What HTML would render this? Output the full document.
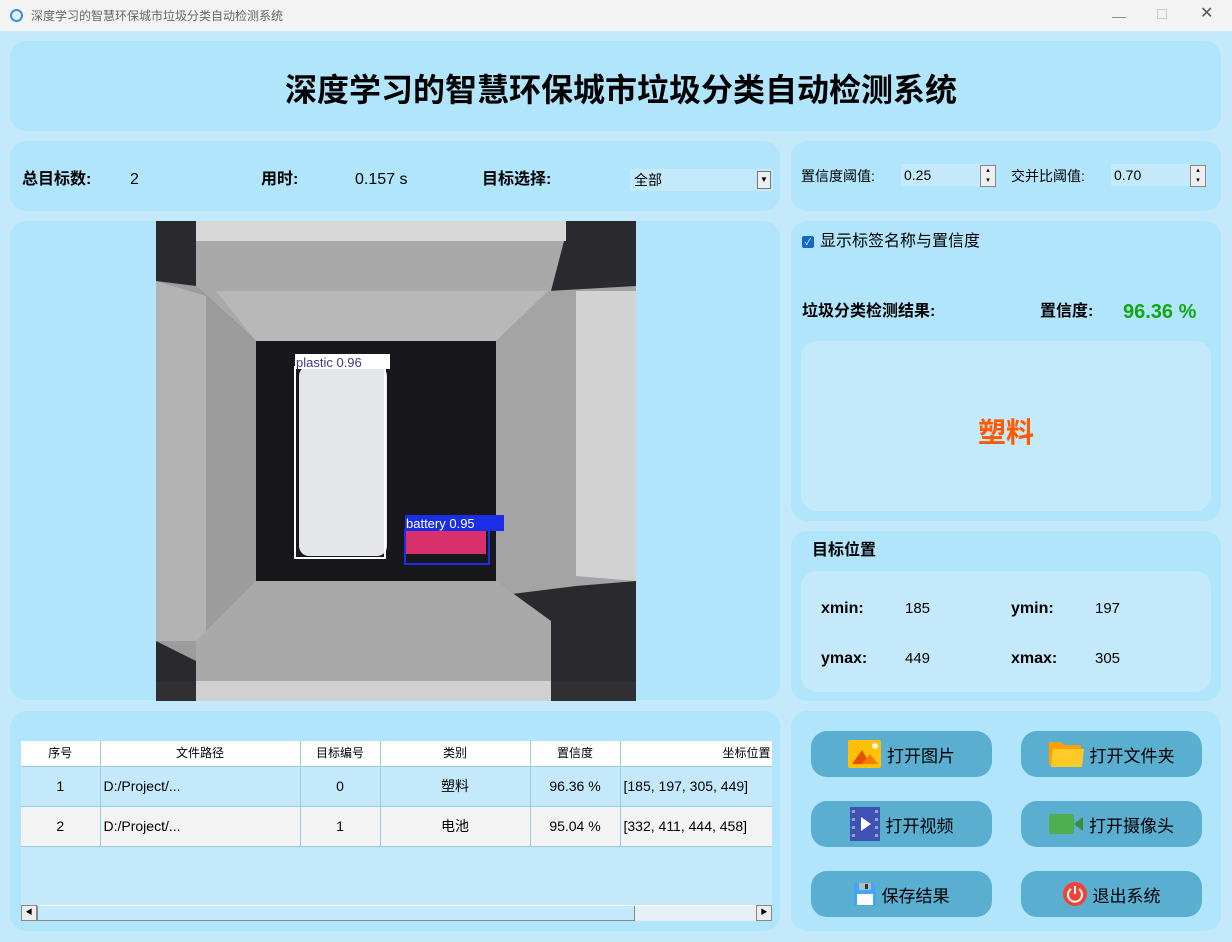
<!DOCTYPE html>
<html><head><meta charset="utf-8"><style>
*{margin:0;padding:0;box-sizing:border-box}
body{width:1232px;height:942px;background:#c4e9fb;font-family:"Liberation Sans","Noto Sans CJK SC",sans-serif;position:relative;overflow:hidden;color:#000}
.abs{position:absolute;line-height:20px}
.panel{position:absolute;background:#b1e5fc;border-radius:16px}
.tb{position:absolute;left:0;top:0;width:1232px;height:31px;background:#f3f3f3;font-size:12px;color:#666}
.b{font-weight:bold}
.btn{position:absolute;width:181px;height:46px;background:#5aaed0;border-radius:16px;font-size:17px;display:flex;align-items:center;justify-content:center;gap:6px}
table{border-collapse:collapse;font-size:14px}
td{border-right:1px solid #9ccbe0;border-bottom:1px solid #9ccbe0;text-align:center}
.spin{position:absolute;width:16px;height:22px;background:#eee;border:1px solid #888;font-size:7px;line-height:10px;text-align:center}
</style></head><body>
<div class="tb">
<div class="abs" style="left:10px;top:9px;width:13px;height:13px;border-radius:50%;border:2px solid #3a8ee6;background:#e8f2fc"></div>
<div class="abs" style="left:31px;top:6px">深度学习的智慧环保城市垃圾分类自动检测系统</div>
<div class="abs" style="left:1112px;top:6px;font-size:14px;color:#888">—</div>
<div class="abs" style="left:1157px;top:9px;width:10px;height:10px;border:1px solid #ccc"></div>
<div class="abs" style="left:1200px;top:4px;font-size:16px;color:#555">✕</div>
</div>

<div class="panel" style="left:10px;top:41px;width:1211px;height:90px"></div>
<div class="abs b" style="left:0;width:1242px;top:72px;text-align:center;font-size:32px;line-height:36px">深度学习的智慧环保城市垃圾分类自动检测系统</div>

<div class="panel" style="left:10px;top:141px;width:770px;height:70px"></div>
<div class="abs b" style="left:22px;top:170px;font-size:16px">总目标数:</div>
<div class="abs" style="left:130px;top:170px;font-size:16px">2</div>
<div class="abs b" style="left:261px;top:170px;font-size:16px">用时:</div>
<div class="abs" style="left:355px;top:170px;font-size:16px">0.157 s</div>
<div class="abs b" style="left:482px;top:170px;font-size:16px">目标选择:</div>
<div class="abs" style="left:630px;top:169px;width:143px;height:22px;background:#c4e9fb;font-size:14px;padding:1px 4px">全部</div>
<div class="abs" style="left:757px;top:171px;width:14px;height:18px;background:#eee;border:1px solid #777;font-size:8px;text-align:center;line-height:16px">▼</div>

<div class="panel" style="left:791px;top:141px;width:430px;height:70px"></div>
<div class="abs" style="left:801px;top:166px;font-size:14px">置信度阈值:</div>
<div class="abs" style="left:901px;top:164px;width:80px;height:22px;background:#c4e9fb;font-size:14px;padding:1px 3px">0.25</div>
<div class="spin" style="left:980px;top:165px">▴<br>▾</div>
<div class="abs" style="left:1011px;top:166px;font-size:14px">交并比阈值:</div>
<div class="abs" style="left:1111px;top:164px;width:80px;height:22px;background:#c4e9fb;font-size:14px;padding:1px 3px">0.70</div>
<div class="spin" style="left:1190px;top:165px">▴<br>▾</div>

<div class="panel" style="left:10px;top:221px;width:770px;height:479px"></div>
<svg class="abs" style="left:156px;top:221px" width="480" height="480" viewBox="0 0 480 480">
<rect width="480" height="480" fill="#2a2a2e"/>
<rect x="40" y="0" width="370" height="20" fill="#d8d8d8"/>
<polygon points="40,20 408,20 395,70 340,120 100,120 40,65" fill="#a9a9a9"/>
<polygon points="60,70 395,70 340,120 100,120" fill="#b8b8b8"/>
<polygon points="0,60 40,65 100,120 100,380 40,440 0,420" fill="#9c9c9c"/>
<polygon points="0,60 50,75 50,420 0,420" fill="#b3b3b3"/>
<polygon points="392,70 480,65 480,360 420,365 340,375 340,120" fill="#a4a4a4"/>
<polygon points="420,70 480,70 480,360 420,355" fill="#d2d2d2"/>
<polygon points="100,360 340,360 395,400 395,460 40,460 40,420" fill="#a9a9a9"/>
<rect x="0" y="460" width="480" height="20" fill="#303034"/>
<rect x="40" y="460" width="355" height="20" fill="#d0d0d0"/>
<rect x="100" y="120" width="240" height="240" fill="#18181c"/>
<rect x="143" y="145" width="88" height="190" fill="#e4e6ea" rx="10"/>
<rect x="139" y="146" width="90" height="191" fill="none" stroke="#fff" stroke-width="2"/>
<rect x="139" y="133" width="95" height="15" fill="#fff"/>
<text x="140" y="146" font-size="13" fill="#3a3a8a" font-family="Liberation Sans">plastic 0.96</text>
<rect x="250" y="310" width="80" height="23" fill="#d8306a"/>
<rect x="249" y="309" width="84" height="34" fill="none" stroke="#1a2ee8" stroke-width="2"/>
<rect x="249" y="294" width="99" height="16" fill="#1a2ee8"/>
<text x="250" y="307" font-size="13" fill="#fff" font-family="Liberation Sans">battery 0.95</text>
</svg>

<div class="panel" style="left:791px;top:221px;width:430px;height:300px"></div>
<div class="abs" style="left:802px;top:236px;width:12px;height:12px;background:#1668c8;border-radius:2px;color:#fff;font-size:9px;text-align:center;line-height:12px">✓</div>
<div class="abs" style="left:820px;top:232px;font-size:16px">显示标签名称与置信度</div>
<div class="abs b" style="left:802px;top:302px;font-size:16px">垃圾分类检测结果:</div>
<div class="abs b" style="left:1040px;top:302px;font-size:16px">置信度:</div>
<div class="abs b" style="left:1123px;top:301px;font-size:20px;line-height:22px;color:#13a813">96.36 %</div>
<div class="abs" style="left:801px;top:341px;width:410px;height:170px;background:#c4e9fb;border-radius:16px"></div>
<div class="abs b" style="left:801px;width:410px;top:417px;text-align:center;font-size:28px;line-height:32px;color:#ff5a00">塑料</div>

<div class="panel" style="left:791px;top:531px;width:430px;height:170px"></div>
<div class="abs b" style="left:812px;top:541px;font-size:16px">目标位置</div>
<div class="abs" style="left:801px;top:571px;width:410px;height:121px;background:#c4e9fb;border-radius:16px"></div>
<div class="abs b" style="left:821px;top:599px;font-size:16px">xmin:</div>
<div class="abs" style="left:905px;top:599px;font-size:15px">185</div>
<div class="abs b" style="left:1011px;top:599px;font-size:16px">ymin:</div>
<div class="abs" style="left:1095px;top:599px;font-size:15px">197</div>
<div class="abs b" style="left:821px;top:649px;font-size:16px">ymax:</div>
<div class="abs" style="left:905px;top:649px;font-size:15px">449</div>
<div class="abs b" style="left:1011px;top:649px;font-size:16px">xmax:</div>
<div class="abs" style="left:1095px;top:649px;font-size:15px">305</div>

<div class="panel" style="left:10px;top:711px;width:770px;height:220px"></div>
<div class="abs" style="left:21px;top:741px;width:751px;height:180px;background:#c4e9fb;overflow:hidden">
<table style="width:780px">
<tr style="height:25px;background:#fff;font-size:12px"><td style="width:79px">序号</td><td style="width:200px">文件路径</td><td style="width:80px">目标编号</td><td style="width:150px">类别</td><td style="width:90px">置信度</td><td style="text-align:right;padding-right:30px;border-right:none">坐标位置</td></tr>
<tr style="height:40px"><td>1</td><td style="text-align:left;padding-left:3px">D:/Project/...</td><td>0</td><td>塑料</td><td>96.36 %</td><td style="text-align:left;padding-left:3px">[185, 197, 305, 449]</td></tr>
<tr style="height:40px;background:#f3f3f3"><td>2</td><td style="text-align:left;padding-left:3px">D:/Project/...</td><td>1</td><td>电池</td><td>95.04 %</td><td style="text-align:left;padding-left:3px">[332, 411, 444, 458]</td></tr>
</table>
<div class="abs" style="left:0;top:164px;width:751px;height:16px;background:#c4e9fb;border-top:1px solid #fff"></div>
<div class="abs" style="left:0;top:164px;width:16px;height:16px;background:#eee;border:1px solid #888;font-size:7px;text-align:center;line-height:14px">◀</div>
<div class="abs" style="left:16px;top:164px;width:598px;height:16px;border:1px solid #888;border-top-color:#fff;background:#c4e9fb"></div>
<div class="abs" style="left:614px;top:165px;width:121px;height:15px;background:#e6f0f5"></div>
<div class="abs" style="left:735px;top:164px;width:16px;height:16px;background:#eee;border:1px solid #888;font-size:7px;text-align:center;line-height:14px">▶</div>
</div>

<div class="panel" style="left:791px;top:711px;width:430px;height:220px"></div>
<div class="btn" style="left:811px;top:731px"><svg width="33" height="28" viewBox="0 0 33 28"><rect width="33" height="28" rx="2" fill="#ffc107"/><polygon points="4,24 14,10 22,24" fill="#e65100"/><polygon points="14,24 22,14 30,24" fill="#f57c00"/><circle cx="27" cy="6" r="3" fill="#fff8e1"/></svg>打开图片</div>
<div class="btn" style="left:1021px;top:731px"><svg width="35" height="28" viewBox="0 0 35 28"><path d="M0 2h12l3 3h17v20H0z" fill="#ffa000"/><path d="M4 9h31l-2 18H2z" fill="#ffca28"/></svg>打开文件夹</div>
<div class="btn" style="left:811px;top:801px"><svg width="30" height="34" viewBox="0 0 30 34"><rect width="30" height="34" fill="#3f51b5"/><rect x="2" y="3" width="3" height="3" fill="#8ab"/><rect x="2" y="11" width="3" height="3" fill="#8ab"/><rect x="2" y="19" width="3" height="3" fill="#8ab"/><rect x="2" y="27" width="3" height="3" fill="#8ab"/><rect x="25" y="3" width="3" height="3" fill="#8ab"/><rect x="25" y="11" width="3" height="3" fill="#8ab"/><rect x="25" y="19" width="3" height="3" fill="#8ab"/><rect x="25" y="27" width="3" height="3" fill="#8ab"/><polygon points="11,10 21,17 11,24" fill="#fff"/></svg>打开视频</div>
<div class="btn" style="left:1021px;top:801px"><svg width="34" height="20" viewBox="0 0 34 20"><rect width="25" height="20" rx="2" fill="#4caf50"/><polygon points="25,10 34,3 34,17 25,10" fill="#388e3c"/></svg>打开摄像头</div>
<div class="btn" style="left:811px;top:871px"><svg width="22" height="24" viewBox="0 0 22 24"><path d="M0 1h19l3 3v20H0z" fill="#42a5f5"/><rect x="5" y="1" width="12" height="7" fill="#b0bec5"/><rect x="11" y="2" width="3" height="5" fill="#333"/><rect x="3" y="12" width="16" height="11" fill="#fff"/></svg>保存结果</div>
<div class="btn" style="left:1021px;top:871px"><svg width="24" height="24" viewBox="0 0 24 24"><circle cx="12" cy="12" r="12" fill="#f44336"/><path d="M8 7a7 7 0 1 0 8 0" fill="none" stroke="#fff" stroke-width="2"/><path d="M12 4v8" stroke="#fff" stroke-width="2"/></svg>退出系统</div>
</body></html>
